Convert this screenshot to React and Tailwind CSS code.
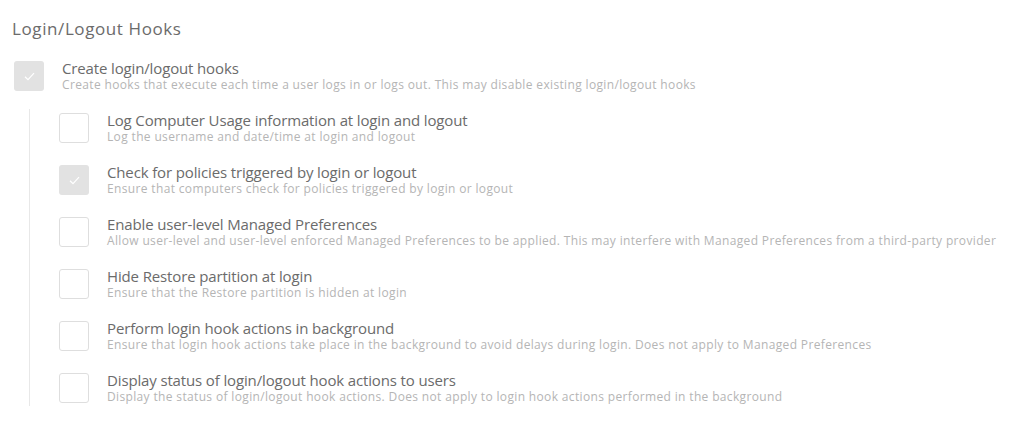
const items = [
  {
    title: 'Log Computer Usage information at login and logout',
    desc: 'Log the username and date/time at login and logout',
    checked: false,
  },
  {
    title: 'Check for policies triggered by login or logout',
    desc: 'Ensure that computers check for policies triggered by login or logout',
    checked: true,
  },
  {
    title: 'Enable user-level Managed Preferences',
    desc: 'Allow user-level and user-level enforced Managed Preferences to be applied. This may interfere with Managed Preferences from a third-party provider',
    checked: false,
  },
  {
    title: 'Hide Restore partition at login',
    desc: 'Ensure that the Restore partition is hidden at login',
    checked: false,
  },
  {
    title: 'Perform login hook actions in background',
    desc: 'Ensure that login hook actions take place in the background to avoid delays during login. Does not apply to Managed Preferences',
    checked: false,
  },
  {
    title: 'Display status of login/logout hook actions to users',
    desc: 'Display the status of login/logout hook actions. Does not apply to login hook actions performed in the background',
    checked: false,
  },
];

const Checkbox = ({ checked }) =>
  checked ? (
    <div className="w-[30px] h-[30px] shrink-0 rounded-[3px] bg-[#e2e2e2] flex items-center justify-center">
      <svg width="11" height="9" viewBox="0 0 11 9" fill="none">
        <path d="M1 4.8 L4 7.6 L10 1.2" stroke="#ffffff" strokeWidth="1.2" />
      </svg>
    </div>
  ) : (
    <div className="w-[30px] h-[30px] shrink-0 rounded-[3px] border border-[#dedede] bg-white" />
  );

const Option = ({ title, desc, checked }) => (
  <div className="flex gap-[18px]">
    <Checkbox checked={checked} />
    <div className="-mt-[1px]">
      <div className="text-[15px] leading-[17px] tracking-[-0.14px] text-[#6b6b6b]">{title}</div>
      <div className="text-[12px] leading-[15px] tracking-[0.35px] text-[#b5b5b5]">{desc}</div>
    </div>
  </div>
);

const App = () => {
  return (
    <div className="w-[1024px] h-[447px] bg-white px-3 pt-[17px]" style={{ fontFamily: '"Open Sans", sans-serif' }}>
      <h1 className="text-[17px] leading-[24px] tracking-[0.6px] text-[#6b6b6b]">Login/Logout Hooks</h1>

      <div className="mt-[20px] ml-[2px]">
        <Option
          title="Create login/logout hooks"
          desc="Create hooks that execute each time a user logs in or logs out. This may disable existing login/logout hooks"
          checked
        />
      </div>

      <div className="mt-[17px] ml-[17px] border-l border-[#e8e8e8] pl-[29px] pt-[4px] pb-[2px] flex flex-col gap-[21px]">
        {items.map((item) => (
          <Option key={item.title} {...item} />
        ))}
      </div>
    </div>
  );
};

export default App;
